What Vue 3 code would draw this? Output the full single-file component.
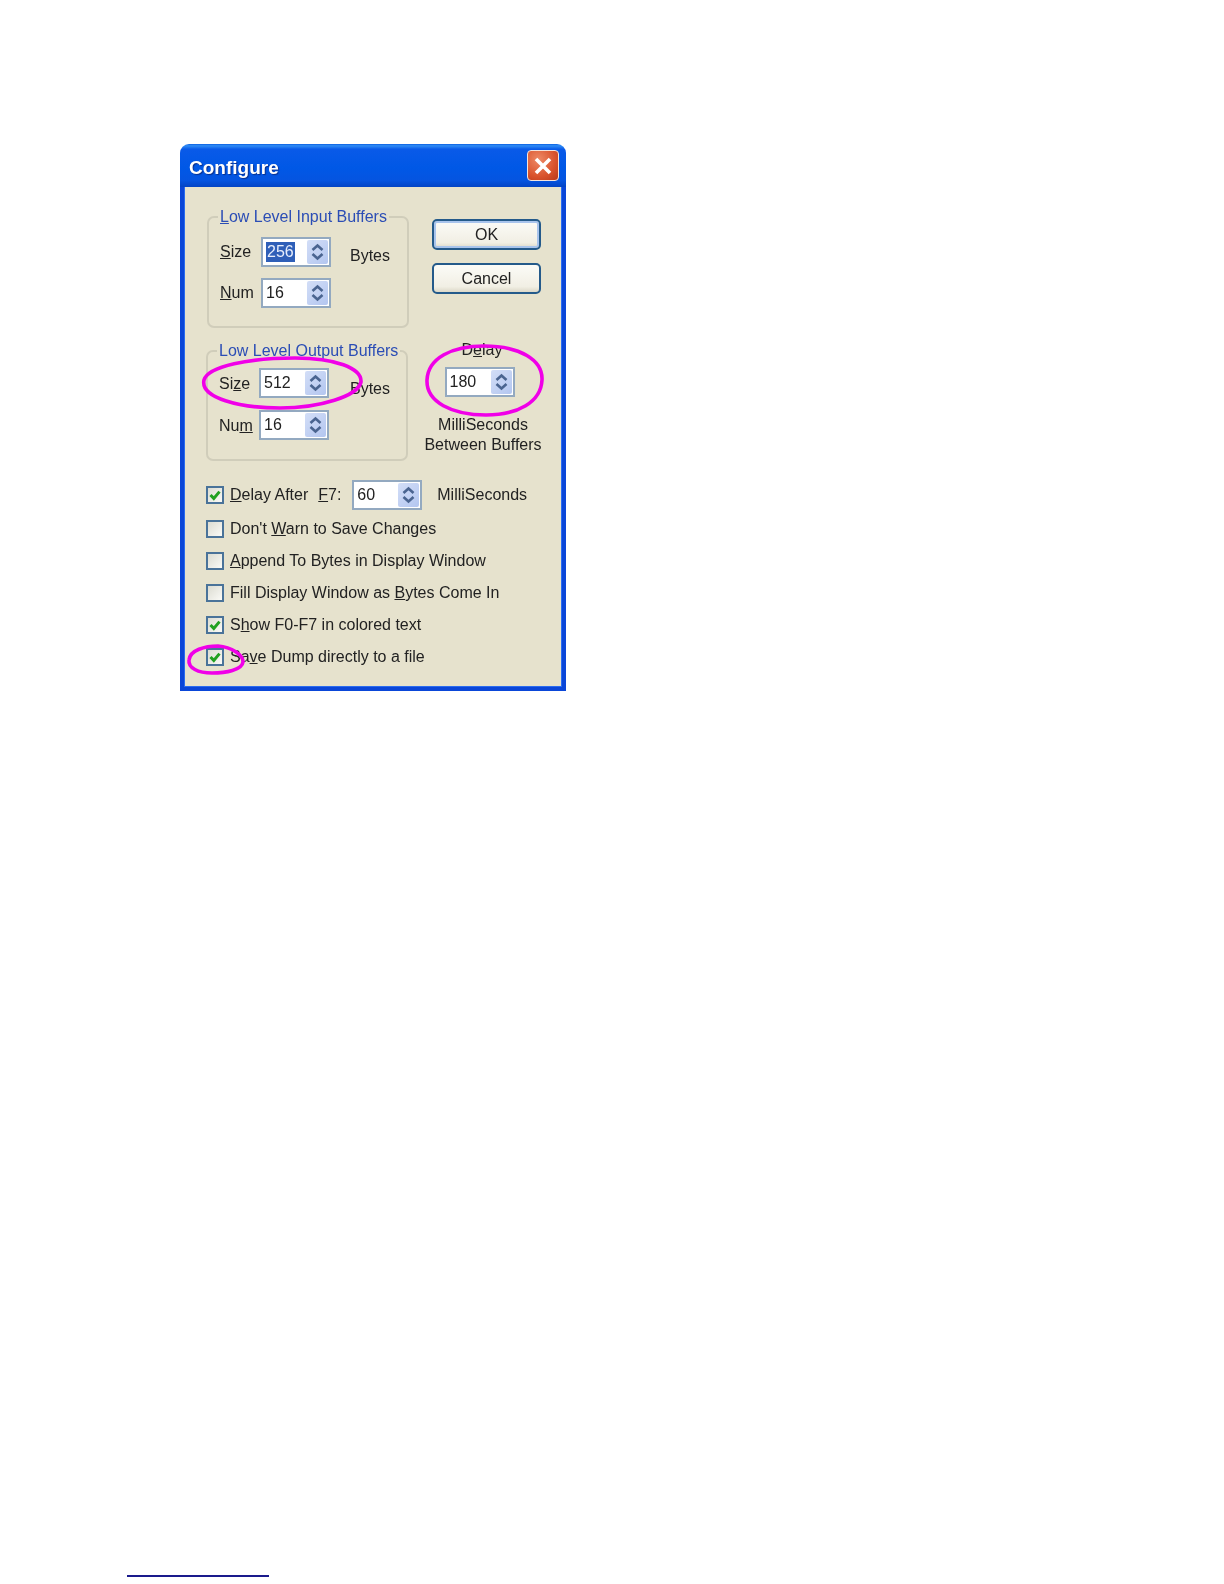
<script setup>
// Checkbox rows of the Configure dialog; pre/key/post split the access key underline.
const options = [
    { pre: "Don't ", key: "W", post: "arn to Save Changes", checked: false },
    { pre: "", key: "A", post: "ppend To Bytes in Display Window", checked: false },
    { pre: "Fill Display Window as ", key: "B", post: "ytes Come In", checked: false },
    { pre: "S", key: "h", post: "ow F0-F7 in colored text", checked: true },
    { pre: "Sa", key: "v", post: "e Dump directly to a file", checked: true },
];
</script>

<template>
    <div class="page">
        <section class="dialog">
            <header class="titlebar">
                <span class="title">Configure</span>
                <button class="close" type="button" aria-label="Close">
                    <svg width="20" height="20" viewBox="0 0 20 20">
                        <path d="M3 3 L17 17 M17 3 L3 17" stroke="#fff" stroke-width="3.6" fill="none" />
                    </svg>
                </button>
            </header>

            <div class="body">
                <div class="top">
                    <fieldset class="group group-input">
                        <legend><u>L</u>ow Level Input Buffers</legend>
                        <div class="field">
                            <label><u>S</u>ize</label>
                            <div class="spin">
                                <span class="value"><span class="selected">256</span></span>
                                <span class="spin-btn">
                                    <svg width="21" height="24" viewBox="0 0 21 24">
                                        <path d="M5.5 10 L10.5 5.5 L15.5 10 M5.5 14 L10.5 18.5 L15.5 14" stroke="#4a6490" stroke-width="2.6" fill="none" />
                                    </svg>
                                </span>
                            </div>
                            <span class="unit">Bytes</span>
                        </div>
                        <div class="field">
                            <label><u>N</u>um</label>
                            <div class="spin">
                                <span class="value">16</span>
                                <span class="spin-btn">
                                    <svg width="21" height="24" viewBox="0 0 21 24">
                                        <path d="M5.5 10 L10.5 5.5 L15.5 10 M5.5 14 L10.5 18.5 L15.5 14" stroke="#4a6490" stroke-width="2.6" fill="none" />
                                    </svg>
                                </span>
                            </div>
                        </div>
                    </fieldset>

                    <div class="buttons">
                        <button class="btn btn-default" type="button">OK</button>
                        <button class="btn" type="button">Cancel</button>
                    </div>

                    <fieldset class="group group-output">
                        <legend>Low Level Output Buffers</legend>
                        <div class="field">
                            <label>Si<u>z</u>e</label>
                            <div class="spin">
                                <span class="value">512</span>
                                <span class="spin-btn">
                                    <svg width="21" height="24" viewBox="0 0 21 24">
                                        <path d="M5.5 10 L10.5 5.5 L15.5 10 M5.5 14 L10.5 18.5 L15.5 14" stroke="#4a6490" stroke-width="2.6" fill="none" />
                                    </svg>
                                </span>
                            </div>
                            <span class="unit">Bytes</span>
                        </div>
                        <div class="field">
                            <label>Nu<u>m</u></label>
                            <div class="spin">
                                <span class="value">16</span>
                                <span class="spin-btn">
                                    <svg width="21" height="24" viewBox="0 0 21 24">
                                        <path d="M5.5 10 L10.5 5.5 L15.5 10 M5.5 14 L10.5 18.5 L15.5 14" stroke="#4a6490" stroke-width="2.6" fill="none" />
                                    </svg>
                                </span>
                            </div>
                        </div>
                    </fieldset>

                    <div class="delay">
                        <span class="delay-label">D<u>e</u>lay</span>
                        <div class="spin">
                            <span class="value">180</span>
                            <span class="spin-btn">
                                <svg width="21" height="24" viewBox="0 0 21 24">
                                    <path d="M5.5 10 L10.5 5.5 L15.5 10 M5.5 14 L10.5 18.5 L15.5 14" stroke="#4a6490" stroke-width="2.6" fill="none" />
                                </svg>
                            </span>
                        </div>
                        <p class="delay-note">MilliSeconds<br />Between Buffers</p>
                    </div>
                </div>

                <div class="check-row delay-row">
                    <span class="check">
                        <svg width="14" height="14" viewBox="0 0 14 14">
                            <path d="M2.5 7 L5.8 10.4 L11.5 3.6" stroke="#21a121" stroke-width="3" fill="none" />
                        </svg>
                    </span>
                    <span class="check-text"><u>D</u>elay After</span>
                    <span class="f7"><u>F</u>7:</span>
                    <div class="spin">
                        <span class="value">60</span>
                        <span class="spin-btn">
                            <svg width="21" height="24" viewBox="0 0 21 24">
                                <path d="M5.5 10 L10.5 5.5 L15.5 10 M5.5 14 L10.5 18.5 L15.5 14" stroke="#4a6490" stroke-width="2.6" fill="none" />
                            </svg>
                        </span>
                    </div>
                    <span class="ms">MilliSeconds</span>
                </div>

                <div v-for="opt in options" :key="opt.post" class="check-row">
                    <span class="check">
                        <svg v-if="opt.checked" width="14" height="14" viewBox="0 0 14 14">
                            <path d="M2.5 7 L5.8 10.4 L11.5 3.6" stroke="#21a121" stroke-width="3" fill="none" />
                        </svg>
                    </span>
                    <span class="check-text">{{ opt.pre }}<u>{{ opt.key }}</u>{{ opt.post }}</span>
                </div>
            </div>
        </section>

        <!-- hand drawn highlights on top of the screenshot -->
        <svg class="marks" width="1224" height="1584" viewBox="0 0 1224 1584">
            <path d="M204 380 C208 366 250 358 295 358 C335 358 362 368 361 382 C358 396 320 408 280 408 C240 408 200 398 204 380 Z" />
            <path d="M427 380 C428 358 452 346 484 346 C520 346 543 360 542 380 C541 402 518 415 486 415 C452 415 426 402 427 380 Z" />
            <path d="M189 660 C190 650 205 646 218 646 C232 647 243 655 243 662 C242 670 226 673 212 673 C198 673 188 668 189 660 Z" />
        </svg>

        <div class="footnote-rule"></div>
    </div>
</template>

<style scoped>
.page {
    position: relative;
    width: 1224px;
    height: 1584px;
    padding: 144px 0 0 180px;
    box-sizing: border-box;
    background: #fff;
    font-family: "Liberation Sans", Arial, sans-serif;
    font-size: 16px;
    color: #222;
    overflow: hidden;
}

.dialog {
    width: 386px;
    height: 547px;
    display: flex;
    flex-direction: column;
    filter: blur(0.45px);
}

.titlebar {
    height: 43px;
    flex: none;
    display: flex;
    align-items: center;
    justify-content: space-between;
    padding: 0 7px 0 9px;
    box-sizing: border-box;
    border-radius: 9px 9px 0 0;
    background: linear-gradient(#0a5fe0 0, #2f8cf5 4%, #0a5ae8 12%, #0058e6 55%, #0554e0 85%, #0344c4 100%);
}

.title {
    color: #fff;
    font-weight: 700;
    font-size: 19px;
    padding-top: 4px;
    text-shadow: 1px 1px 1px #0a2f8a;
}

.close {
    width: 32px;
    height: 31px;
    padding: 0;
    display: flex;
    align-items: center;
    justify-content: center;
    border: 1.5px solid #f4e4dc;
    border-radius: 4px;
    background: radial-gradient(circle at 35% 30%, #ee8a66, #d9532c 60%, #b8381a);
}

.body {
    flex: 1;
    padding: 0 0 0 22px;
    background: #e6e2cd;
    border: solid #0a46d8;
    border-width: 0 4px 4px;
    box-shadow: inset 1px 0 0 #2a6cf0, inset -1px 0 0 #2a6cf0, inset 0 -1px 0 #2a6cf0;
}

.top {
    display: grid;
    grid-template-columns: 218px 1fr;
    grid-template-rows: 112px 111px;
    row-gap: 22px;
    margin-top: 29px;
}

.group {
    margin: 0;
    padding: 11px 0 0 11px;
    width: 202px;
    box-sizing: border-box;
    border: 2px solid #d0cdba;
    border-radius: 7px;
    display: flex;
    flex-direction: column;
    gap: 11px;
}

.group legend {
    margin-left: -2px;
    padding: 0 2px;
    line-height: 19px;
    color: #2b4db5;
    white-space: nowrap;
}

.group-input {
    margin-left: 1px;
    align-self: end;
    height: 121px;
}

.group-output {
    padding-top: 8px;
    gap: 12px;
    height: 120px;
    align-self: end;
}

.field {
    display: flex;
    align-items: center;
}

.field label {
    width: 41px;
    flex: none;
}

.group-output .field label {
    width: 40px;
    margin-top: 2px;
}

.unit {
    margin: 8px 0 0 19px;
}

.group-output .unit {
    margin: 12px 0 0 21px;
}

.spin {
    width: 70px;
    height: 30px;
    flex: none;
    box-sizing: border-box;
    border: 2px solid #93a9c0;
    background: #fff;
    display: flex;
    align-items: center;
    justify-content: space-between;
    padding: 0 1px 0 3px;
}

.value {
    line-height: 20px;
    font-size: 16px;
}

.selected {
    display: inline-block;
    padding: 0 1px;
    background: #2f5fb8;
    color: #e8eefc;
}

.spin-btn {
    width: 21px;
    height: 24px;
    display: block;
    background: linear-gradient(135deg, #d3def7, #b3c6f0);
    border-radius: 2px;
}

.spin-btn svg {
    display: block;
}

.buttons {
    display: flex;
    flex-direction: column;
    gap: 13px;
    margin: 3px 0 0 8px;
}

.btn {
    width: 109px;
    height: 31px;
    padding: 0;
    font: inherit;
    color: #222;
    border: 2px solid #245a8a;
    border-radius: 5px;
    background: linear-gradient(#fbfbf7, #f1efe4 80%, #dcd8c8);
}

.btn-default {
    box-shadow: inset 0 0 0 2px #a8c4ec;
}

.delay {
    display: flex;
    flex-direction: column;
    align-items: center;
    width: 118px;
    margin-left: 0;
}

.delay-label {
    line-height: 20px;
    margin: -10px 2px 0 0;
}

.delay .spin {
    margin: 7px 0 0 -7px;
}

.delay-note {
    margin: 18px 0 0;
    line-height: 20px;
    text-align: center;
    white-space: nowrap;
}

.check-row {
    display: flex;
    align-items: center;
    height: 32px;
}

.delay-row {
    margin: 18px 0 3px;
    height: 31px;
}

.check {
    width: 18px;
    height: 18px;
    flex: none;
    box-sizing: border-box;
    border: 2px solid #4a7399;
    background: linear-gradient(135deg, #dcdcd2, #fafaf6);
    display: flex;
    align-items: center;
    justify-content: center;
}

.check-text {
    margin-left: 6px;
    white-space: nowrap;
}

.f7 {
    margin-left: 10px;
    width: 34px;
}

.ms {
    margin-left: 15px;
}

.marks {
    position: absolute;
    left: 0;
    top: 0;
    pointer-events: none;
}

.marks path {
    fill: none;
    stroke: #f000e8;
    stroke-width: 3.6;
}

.footnote-rule {
    width: 142px;
    height: 2px;
    margin: 884px 0 0 -53px;
    background: #1a1a8c;
}
</style>
